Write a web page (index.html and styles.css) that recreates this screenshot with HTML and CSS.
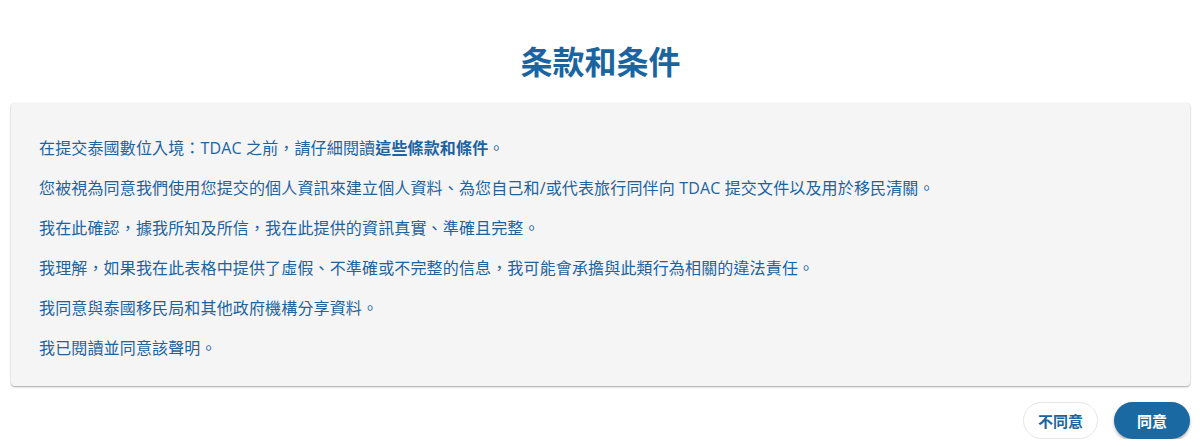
FILE: index.html
```html
<!DOCTYPE html>
<html lang="zh-Hant">
<head>
<meta charset="utf-8">
<link rel="stylesheet" href="styles.css">
</head>
<body>
<div class="page">
  <h1 class="title">条款和条件</h1>
  <div class="card">
    <p>在提交泰國數位入境：TDAC 之前，請仔細閱讀<strong>這些條款和條件</strong>。</p>
    <p>您被視為同意我們使用您提交的個人資訊來建立個人資料、為您自己和/或代表旅行同伴向 TDAC 提交文件以及用於移民清關。</p>
    <p>我在此確認，據我所知及所信，我在此提供的資訊真實、準確且完整。</p>
    <p>我理解，如果我在此表格中提供了虛假、不準確或不完整的信息，我可能會承擔與此類行為相關的違法責任。</p>
    <p>我同意與泰國移民局和其他政府機構分享資料。</p>
    <p>我已閱讀並同意該聲明。</p>
  </div>
  <div class="actions">
    <button class="btn btn-outline">不同意</button>
    <button class="btn btn-primary">同意</button>
  </div>
</div>
</body>
</html>
```
FILE: styles.css
```css
html, body {
  margin: 0;
  padding: 0;
  background: #ffffff;
}
body {
  font-family: "Open Sans", "Noto Sans CJK TC", sans-serif;
  color: #1d63a0;
}
.page {
  padding: 0 10px 0 11px;
}
.title {
  margin: 0;
  padding-top: 40px;
  text-align: center;
  font-size: 32px;
  line-height: 44px;
  font-weight: 700;
  color: #1a65a0;
  font-family: "Open Sans", "Noto Sans CJK SC", sans-serif;
}
.card {
  margin-top: 19px;
  background: #f5f5f5;
  border-radius: 4px;
  box-shadow: 0 1px 2px rgba(0,0,0,0.35), 0 0 1px rgba(0,0,0,0.08);
  padding: 25px 28px 22px;
  height: 283px;
  box-sizing: border-box;
}
.card p {
  margin: 0;
  font-size: 16px;
  line-height: 40px;
  letter-spacing: 0.15px;
}
.card strong {
  font-weight: 700;
}
.actions {
  display: flex;
  justify-content: flex-end;
  gap: 16px;
  margin-top: 16px;
}
.btn {
  font-family: "Open Sans", "Noto Sans CJK TC", sans-serif;
  font-size: 15px;
  font-weight: 700;
  height: 37px;
  border-radius: 19px;
  padding: 0;
  white-space: nowrap;
  cursor: pointer;
}
.btn-outline {
  background: #ffffff;
  color: #1a65a0;
  border: 1px solid #e6e6e6;
  width: 75px;
}
.btn-primary {
  background: #1b69a3;
  color: #ffffff;
  border: none;
  width: 76px;
  box-shadow: 0 2px 3px rgba(0,0,0,0.3);
}
```
